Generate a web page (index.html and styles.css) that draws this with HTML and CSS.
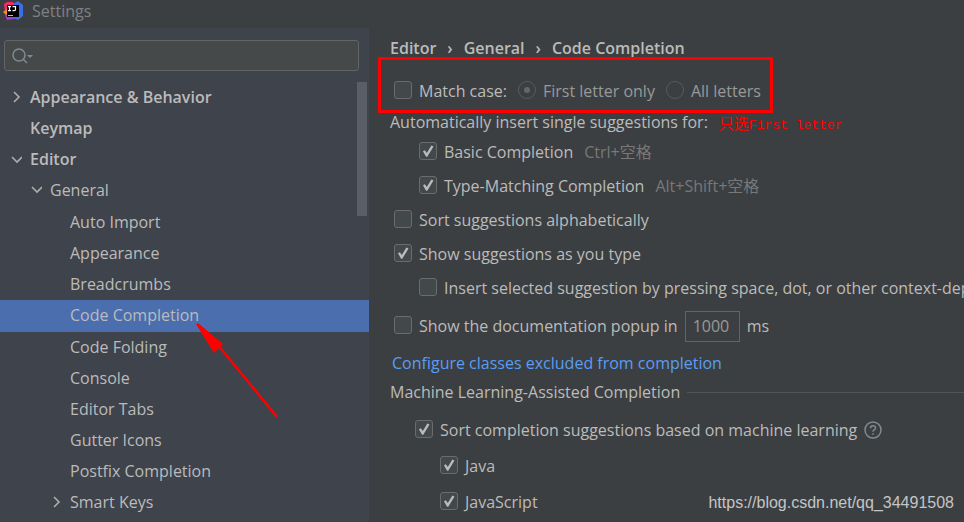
FILE: index.html
```html
<!DOCTYPE html>
<html lang="en">
<head>
<meta charset="utf-8">
<title>Settings</title>
<link rel="stylesheet" href="styles.css">
</head>
<body>
<header class="titlebar">
  <svg class="logo" viewBox="0 0 20 20" aria-hidden="true">
    <path fill="#f7286b" d="M1 3 4 1h6l3 5-8 8-3-3z"/>
    <path fill="#f98a22" d="M0 11 4 8v7z"/>
    <path fill="#a33fd0" d="M2 14 8 12l7 5-3 1-8 1z"/>
    <path fill="#3b6fe8" d="M10 3 15 0l5 4v11l-5 4-5-2z"/>
    <path fill="#000" d="M4 4h12v12H4z"/>
    <path fill="none" stroke="#fff" stroke-width="1.2" d="M5 5.600h3M6.500 5.600v4M5 9.600h3M9.500 5.600h3v3q0 1-1.200 1H9.500"/>
    <path fill="#bbb" d="M5 14h5v1H5z"/>
  </svg>
  <span class="title">Settings</span>
</header>
<div class="window">
  <aside class="sidebar">
    <div class="search">
      <svg class="search-icon" viewBox="0 0 22 18" aria-hidden="true">
        <circle cx="7" cy="8" r="6"/><path d="m11 12 4 4"/><path class="caret" d="M15 8h6l-3 3z"/>
      </svg>
      <input type="text" aria-label="Search settings">
    </div>
    <nav class="tree" aria-label="Settings">
      <ul>
        <li><a class="row top" href="#"><svg class="arrow" viewBox="0 0 12 12"><path d="M4 1l5 5-5 5"/></svg>Appearance &amp; Behavior</a></li>
        <li><a class="row top" href="#"><span class="arrow"></span>Keymap</a></li>
        <li><a class="row top" href="#"><svg class="arrow" viewBox="0 0 12 12"><path d="M2 4l5 5 5-5"/></svg>Editor</a>
          <ul>
            <li><a class="row mid" href="#"><svg class="arrow" viewBox="0 0 12 12"><path d="M2 3l5 5 5-5"/></svg>General</a>
              <ul class="leaves">
                <li><a class="row" href="#"><span class="arrow"></span>Auto Import</a></li>
                <li><a class="row" href="#"><span class="arrow"></span>Appearance</a></li>
                <li><a class="row" href="#"><span class="arrow"></span>Breadcrumbs</a></li>
                <li><a class="row selected" href="#" aria-current="page"><span class="arrow"></span>Code Completion</a></li>
                <li><a class="row" href="#"><span class="arrow"></span>Code Folding</a></li>
                <li><a class="row" href="#"><span class="arrow"></span>Console</a></li>
                <li><a class="row" href="#"><span class="arrow"></span>Editor Tabs</a></li>
                <li><a class="row" href="#"><span class="arrow"></span>Gutter Icons</a></li>
                <li><a class="row" href="#"><span class="arrow"></span>Postfix Completion</a></li>
                <li><a class="row" href="#"><svg class="arrow" viewBox="0 0 12 12"><path d="M4 1l5 5-5 5"/></svg>Smart Keys</a></li>
              </ul>
            </li>
          </ul>
        </li>
      </ul>
      <div class="scrollbar"></div>
      <svg class="pointer" viewBox="0 0 84 96" aria-hidden="true">
        <path d="M22 22 81 94" stroke="#f00" stroke-width="2.500"/>
        <path fill="#f00" d="M0 1 2 0 27 21 18 30z"/>
      </svg>
    </nav>
  </aside>
  <main class="content">
    <nav class="crumbs" aria-label="Breadcrumb"><a href="#">Editor</a><span>›</span><a href="#">General</a><span>›</span><a href="#">Code Completion</a></nav>
    <div class="line match">
      <label class="option"><input type="checkbox">Match case:</label>
      <label class="option dim"><input type="radio" name="case" checked disabled>First letter only</label>
      <label class="option dim"><input type="radio" name="case" disabled>All letters</label>
    </div>
    <div class="line auto">Automatically insert single suggestions for:<span class="note"><span class="note-cjk">只选</span>First letter</span></div>
    <div class="line indent"><label class="option"><input type="checkbox" checked>Basic Completion</label><span class="shortcut">Ctrl+空格</span></div>
    <div class="line indent"><label class="option"><input type="checkbox" checked>Type-Matching Completion</label><span class="shortcut">Alt+Shift+空格</span></div>
    <div class="line"><label class="option"><input type="checkbox">Sort suggestions alphabetically</label></div>
    <div class="line"><label class="option"><input type="checkbox" checked>Show suggestions as you type</label></div>
    <div class="line indent"><label class="option"><input type="checkbox">Insert selected suggestion by pressing space, dot, or other context-dep</label></div>
    <div class="line popup"><label class="option"><input type="checkbox">Show the documentation popup in</label><input class="delay" type="text" value="1000" aria-label="Delay in milliseconds"><span>ms</span></div>
    <div class="line link"><a href="#">Configure classes excluded from completion</a></div>
    <h2 class="section">Machine Learning-Assisted Completion</h2>
    <div class="line ml"><label class="option"><input type="checkbox" checked>Sort completion suggestions based on machine learning</label>
      <svg class="help" viewBox="0 0 18 18" aria-hidden="true"><circle cx="9" cy="9" r="8"/><path d="M6.500 7.200q0-2.400 2.500-2.400t2.500 2.200q0 1.200-1.300 1.900T9 10.800M9 12.200v1.600"/></svg></div>
    <div class="line ml lang"><label class="option"><input type="checkbox" checked>Java</label></div>
    <div class="line ml lang"><label class="option"><input type="checkbox" checked>JavaScript</label></div>
    <div class="watermark">https://blog.csdn.net/qq_34491508</div>
  </main>
</div>
</body>
</html>
```

FILE: styles.css
```css
*, *::before, *::after { box-sizing: border-box; }
body {
  margin: 0;
  min-height: 100vh;
  display: flex;
  flex-direction: column;
  background: #3c3f41;
  color: #bbbbbb;
  font: 16px/20px "Open Sans", "Noto Sans CJK SC", sans-serif;
}
a { color: inherit; text-decoration: none; }
ul { list-style: none; margin: 0; padding: 0; }

.titlebar { height: 28px; display: flex; align-items: center; gap: 9px; padding: 0 3px 6px; color: #7f8183; }
.logo { width: 20px; height: 20px; }

.window { flex: 1; display: grid; grid-template-columns: 369px minmax(0, 1fr); }
.sidebar { background: #3f434c; padding-top: 12px; }
.search {
  height: 31px;
  margin: 0 10px 11px 4px;
  padding-left: 7px;
  display: flex;
  align-items: center;
  background: #45494a;
  border: 1px solid #646464;
  border-radius: 3px;
}
.search-icon { width: 22px; height: 18px; fill: none; stroke: #7f8b91; stroke-width: 1.5; }
.search-icon .caret { fill: #7f8b91; stroke: none; }
.search input { flex: 1; min-width: 0; border: 0; outline: 0; background: none; color: inherit; font: inherit; }

.tree { position: relative; }
.row { display: flex; align-items: center; gap: 8px; height: 31px; padding: 0 0 2px 50px; }
.row.top { padding-left: 10px; font-weight: 600; }
.row.mid { padding-left: 30px; }
.row.selected { height: 32px; background: #4b6eaf; }
.leaves { padding-top: 1px; }
.arrow { width: 12px; height: 12px; fill: none; stroke: #adadad; stroke-width: 1.6; }
.scrollbar { position: absolute; top: 0; right: 2px; width: 10px; height: 134px; background: #5b5e66; }
.pointer { position: absolute; left: 196px; top: 241px; width: 84px; height: 96px; }

.content { position: relative; padding-left: 21px; overflow: hidden; }
.crumbs { height: 40px; display: flex; align-items: center; gap: 11px; font-weight: 600; }
.line { height: 34px; display: flex; align-items: center; white-space: nowrap; padding-left: 4px; }
.option { display: flex; align-items: center; gap: 7px; }
.option input {
  appearance: none;
  flex: none;
  display: grid;
  place-items: center;
  width: 18px;
  height: 18px;
  margin: 0 0 2px;
  background: #43494a;
  border: 1px solid #6b6b6b;
  border-radius: 3px;
}
.option input[type="checkbox"]:checked::before {
  content: "";
  width: 12px;
  height: 12px;
  background: #bbbbbb;
  clip-path: polygon(8% 52%, 24% 44%, 40% 66%, 78% 4%, 96% 12%, 44% 98%, 34% 98%);
}
.option input[type="radio"] { background: none; border-color: #585a5c; border-radius: 50%; }
.option input[type="radio"]:checked::before { content: ""; width: 6px; height: 6px; border-radius: 50%; background: #646667; }
.dim { color: #999999; }
.match { position: relative; margin-top: 6px; gap: 11px; }
.match::after {
  content: "";
  position: absolute;
  left: -12px;
  top: -17px;
  width: 395px;
  height: 56px;
  border: 3px solid #f00;
}
.auto { height: 27px; padding-left: 0; }
.note { margin-left: 11px; padding-top: 9px; color: #f00; font: 13px/20px "Liberation Mono", "Noto Sans CJK SC", monospace; }
.note-cjk { font-size: 15px; }
.indent { padding-left: 29px; }
.shortcut { margin-left: 11px; color: #787878; }
.popup { height: 42px; gap: 7px; }
.delay {
  width: 55px;
  height: 31px;
  padding: 0 7px;
  background: none;
  border: 1px solid #646464;
  color: #999999;
  font: inherit;
}
.link { height: 32px; padding-left: 2px; color: #589df6; }
.section { height: 26px; margin: 0 0 7px; display: flex; align-items: center; gap: 7px; font: inherit; }
.section::after { content: ""; flex: 1; height: 1px; background: #515456; }
.ml { height: 36px; padding-left: 25px; gap: 7px; }
.lang { padding-left: 50px; }
.help { width: 18px; height: 18px; fill: none; stroke: #7f8b91; stroke-width: 1.5; }
.watermark { position: absolute; right: 10px; bottom: 9px; color: #c4c5c6; font: 16px/20px "Liberation Sans", sans-serif; }
```
